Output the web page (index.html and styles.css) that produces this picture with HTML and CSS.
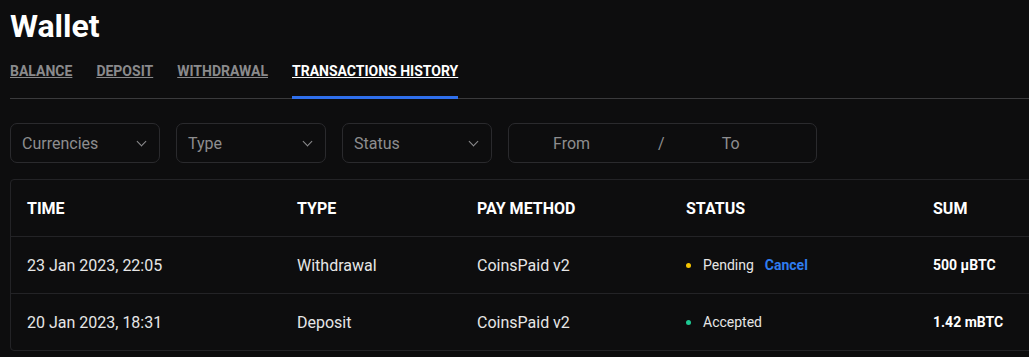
FILE: index.html
```html
<!DOCTYPE html>
<html lang="en">
<head>
    <meta charset="UTF-8">
    <title>Wallet</title>
    <link rel="stylesheet" href="styles.css">
</head>
<body>

<div class="wallet">
    <h1>Wallet</h1>

    <nav class="tabs">
        <a href="#">Balance</a>
        <a href="#">Deposit</a>
        <a href="#">Withdrawal</a>
        <a href="#" class="active">Transactions history</a>
    </nav>

    <div class="filters">
        <div class="select">Currencies <span class="chevron"></span></div>
        <div class="select">Type <span class="chevron"></span></div>
        <div class="select">Status <span class="chevron"></span></div>
        <div class="dates">
            <span class="from">From</span>
            <span class="slash">/</span>
            <span class="to">To</span>
        </div>
    </div>

    <div class="table">
        <div class="row head">
            <div>Time</div>
            <div>Type</div>
            <div>Pay method</div>
            <div>Status</div>
            <div>Sum</div>
        </div>
        <div class="row">
            <div>23 Jan 2023, 22:05</div>
            <div>Withdrawal</div>
            <div>CoinsPaid v2</div>
            <div class="status"><span class="dot pending"></span>Pending <a href="#" class="cancel">Cancel</a></div>
            <div class="sum">500 µBTC</div>
        </div>
        <div class="row">
            <div>20 Jan 2023, 18:31</div>
            <div>Deposit</div>
            <div>CoinsPaid v2</div>
            <div class="status"><span class="dot accepted"></span>Accepted</div>
            <div class="sum">1.42 mBTC</div>
        </div>
    </div>
</div>

</body>
</html>
```

FILE: styles.css
```css
body {
    margin: 0;
    background: #0d0d0e;
    color: #fff;
    font-family: Roboto, "Noto Sans", sans-serif;
    overflow: hidden;
}

.wallet {
    padding: 0 0 0 10px;
    width: 1120px;
}

h1 {
    margin: 0;
    padding-top: 8px;
    font-size: 32px;
    line-height: 36px;
    font-weight: 700;
}

.tabs {
    display: flex;
    gap: 24px;
    margin-top: 19px;
    border-bottom: 1px solid #3a3a3c;
}

.tabs a {
    color: #8a8a8c;
    font-size: 14px;
    font-weight: 700;
    text-transform: uppercase;
    text-decoration: underline;
    line-height: 16px;
    padding-bottom: 17px;
    border-bottom: 3px solid transparent;
    margin-bottom: -1px;
}

.tabs a.active {
    color: #fff;
    border-bottom-color: #2f6fec;
}

.filters {
    display: flex;
    gap: 16px;
    margin-top: 24px;
}

.select,
.dates {
    box-sizing: border-box;
    height: 40px;
    border: 1px solid #2a2a2d;
    border-radius: 7px;
    color: #8d8d8f;
    font-size: 16px;
    display: flex;
    align-items: center;
}

.select {
    width: 150px;
    padding: 0 14px 0 11px;
    justify-content: space-between;
}

.chevron {
    width: 6px;
    height: 6px;
    border-right: 1.3px solid #8d8d8f;
    border-bottom: 1.3px solid #8d8d8f;
    transform: rotate(45deg);
    margin-top: -4px;
}

.dates {
    width: 309px;
}

.from {
    margin-left: 44px;
}

.slash {
    margin-left: 68px;
}

.to {
    margin-left: 57px;
}

.table {
    margin-top: 16px;
    border: 1px solid #232326;
    border-radius: 4px;
}

.row {
    display: grid;
    grid-template-columns: 270px 180px 209px 247px 1fr;
    height: 56px;
    align-items: center;
    padding-left: 16px;
    border-top: 1px solid #232326;
    font-size: 16px;
    color: #e6e6e6;
}

.row.head {
    border-top: none;
    color: #fff;
    font-weight: 700;
    text-transform: uppercase;
}

.status {
    display: flex;
    align-items: center;
    font-size: 14px;
}

.dot {
    width: 5px;
    height: 5px;
    border-radius: 50%;
    margin-right: 12px;
}

.dot.pending {
    background: #f5c400;
}

.dot.accepted {
    background: #1dc993;
}

.cancel {
    color: #2f7cf0;
    font-size: 14px;
    font-weight: 700;
    text-decoration: none;
    margin-left: 11px;
}

.sum {
    font-size: 14px;
    font-weight: 700;
    color: #fff;
}
```
